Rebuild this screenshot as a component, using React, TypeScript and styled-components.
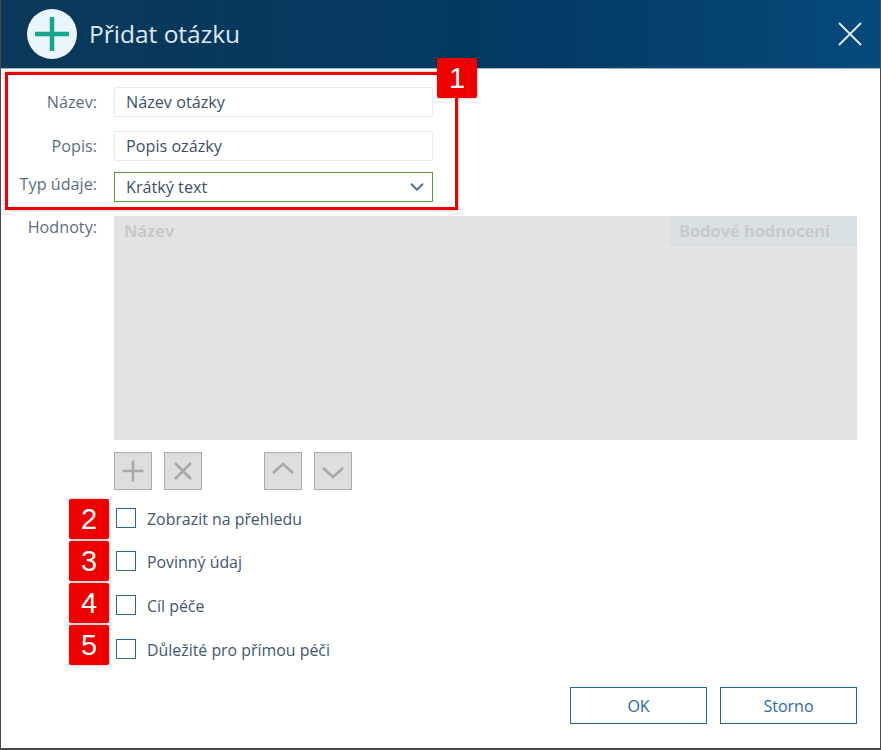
import styled, { createGlobalStyle } from "styled-components";
import { ChevronDown } from "lucide-react";

const GlobalStyle = createGlobalStyle`
  html, body {
    margin: 0;
    padding: 0;
    background: #ffffff;
  }
  * {
    box-sizing: border-box;
  }
`;

const DialogWindow = styled.div`
  position: relative;
  width: 881px;
  height: 750px;
  display: flex;
  flex-direction: column;
  background: #ffffff;
  border: 1px solid #4a4a4a;
  border-top: none;
  border-bottom-width: 2px;
  font-family: "Open Sans", "Liberation Sans", sans-serif;
  font-size: 16.2px;
  color: #42566e;
  overflow: hidden;
`;

const TitleBar = styled.header`
  height: 69px;
  flex: none;
  display: flex;
  align-items: center;
  padding: 0 18px 1px 26px;
  background: linear-gradient(90deg, #0a3859 0%, #033a63 60%, #064a7c 100%);
  border-bottom: 1px solid #9db6c9;
`;

const AddBadge = styled.div`
  width: 50px;
  height: 50px;
  border-radius: 50%;
  background: #e9f4fb;
  display: flex;
  align-items: center;
  justify-content: center;
`;

const Title = styled.h1`
  flex: 1;
  margin: 0 0 0 12px;
  font-size: 24.5px;
  font-weight: 400;
  color: #dfe9f0;
`;

const CloseButton = styled.button`
  width: 24px;
  height: 24px;
  padding: 0;
  border: none;
  background: none;
  display: flex;
`;

const FormBody = styled.main`
  flex: 1;
  display: flex;
  flex-direction: column;
  padding: 18px 23px 0 0;
`;

const FieldRow = styled.div<{ $gap: number }>`
  display: flex;
  align-items: center;
  margin-bottom: ${(p) => p.$gap}px;
`;

const FieldLabel = styled.label<{ $raised?: boolean }>`
  width: 96px;
  flex: none;
  margin-right: 17px;
  margin-bottom: ${(p) => (p.$raised ? "6px" : "0")};
  text-align: right;
  color: #5c6d80;
`;

const TextField = styled.div`
  width: 319px;
  height: 30px;
  display: flex;
  align-items: center;
  padding: 0 11px;
  border: 1px solid #e6ebf5;
  color: #3d5068;
`;

const SelectField = styled(TextField)`
  justify-content: space-between;
  padding-right: 4px;
  border-color: #5c9a3c;
`;

const ValuesRow = styled.div`
  display: flex;
  align-items: flex-start;
`;

const ValuesTable = styled.div`
  flex: 1;
  height: 224px;
  background: #e3e3e3;
`;

const TableHead = styled.div`
  display: flex;
  height: 32px;
  border-bottom: 1px solid #e8e8e8;
  font-size: 16.4px;
  font-weight: 700;
  line-height: 30px;
  color: #c6c9cd;
`;

const NameColumn = styled.div`
  flex: 1;
  padding-left: 10px;
`;

const ScoreColumn = styled.div`
  width: 187px;
  padding-left: 9px;
  background: #d9e1e5;
`;

const ToolRow = styled.div`
  display: flex;
  gap: 12px;
  margin: 12px 0 6px 113px;
`;

const ToolButton = styled.button<{ $spaced?: boolean }>`
  width: 38px;
  height: 38px;
  padding: 0;
  display: flex;
  align-items: center;
  justify-content: center;
  background: #dedede;
  border: 1px solid #adadad;
  margin-left: ${(p) => (p.$spaced ? "50px" : "0")};
`;

const CheckList = styled.div`
  display: flex;
  flex-direction: column;
  margin-left: 115px;
`;

const CheckRow = styled.label`
  height: 43.6px;
  display: flex;
  align-items: center;
  gap: 11px;
  font-size: 15.9px;
  color: #42566e;
`;

const CheckBox = styled.span`
  width: 20px;
  height: 20px;
  flex: none;
  border: 1px solid #2f6592;
`;

const CheckText = styled.span`
  padding-top: 2px;
`;

const ButtonBar = styled.footer`
  display: flex;
  justify-content: flex-end;
  gap: 13px;
  margin-top: 17px;
`;

const DialogButton = styled.button`
  width: 137px;
  height: 37px;
  background: #ffffff;
  border: 1px solid #1f6596;
  font-family: inherit;
  font-size: 16px;
  color: #2c6a9c;
`;

const HighlightFrame = styled.div`
  position: absolute;
  left: 4px;
  top: 72px;
  width: 453px;
  height: 138px;
  border: 3px solid #ee0000;
  box-shadow: 0 0 3px rgba(0, 0, 0, 0.35);
`;

const NumberBadge = styled.div<{ $left: number; $top: number }>`
  position: absolute;
  left: ${(p) => p.$left}px;
  top: ${(p) => p.$top}px;
  width: 40px;
  height: 40px;
  display: flex;
  align-items: center;
  justify-content: center;
  background: #ee0000;
  border-radius: 2px;
  box-shadow: 0 0 3px rgba(0, 0, 0, 0.35);
  font-family: "Liberation Sans", Arial, sans-serif;
  font-size: 29px;
  color: #ffffff;
`;

const checks = [
  "Zobrazit na přehledu",
  "Povinný údaj",
  "Cíl péče",
  "Důležité pro přímou péči",
];

const badges = [
  { n: 1, left: 436, top: 58 },
  { n: 2, left: 68, top: 499 },
  { n: 3, left: 68, top: 541 },
  { n: 4, left: 68, top: 583 },
  { n: 5, left: 68, top: 625 },
];

const ToolIcon = ({ d }: { d: string }) => (
  <svg width="28" height="28" viewBox="0 0 28 28" fill="none" stroke="#a8a8a8" strokeWidth="2.6">
    <path d={d} />
  </svg>
);

export default function App() {
  return (
    <>
      <GlobalStyle />
      <DialogWindow>
        <TitleBar>
          <AddBadge>
            <svg width="36" height="36" viewBox="0 0 36 36" fill="none" stroke="#17a58c" strokeWidth="4.5">
              <path d="M18 1v34M1 18h34" />
            </svg>
          </AddBadge>
          <Title>Přidat otázku</Title>
          <CloseButton>
            <svg width="24" height="24" viewBox="0 0 24 24" fill="none" stroke="#e8eff4" strokeWidth="1.8">
              <path d="M1 1l22 22M23 1L1 23" />
            </svg>
          </CloseButton>
        </TitleBar>
        <FormBody>
          <FieldRow $gap={14}>
            <FieldLabel>Název:</FieldLabel>
            <TextField>Název otázky</TextField>
          </FieldRow>
          <FieldRow $gap={11}>
            <FieldLabel>Popis:</FieldLabel>
            <TextField>Popis ozázky</TextField>
          </FieldRow>
          <FieldRow $gap={14}>
            <FieldLabel $raised>Typ údaje:</FieldLabel>
            <SelectField>
              Krátký text
              <ChevronDown size={22} color="#4a6c94" strokeWidth={2} />
            </SelectField>
          </FieldRow>
          <ValuesRow>
            <FieldLabel>Hodnoty:</FieldLabel>
            <ValuesTable>
              <TableHead>
                <NameColumn>Název</NameColumn>
                <ScoreColumn>Bodové hodnocení</ScoreColumn>
              </TableHead>
            </ValuesTable>
          </ValuesRow>
          <ToolRow>
            <ToolButton><ToolIcon d="M14 3.5v21M3.5 14h21" /></ToolButton>
            <ToolButton><ToolIcon d="M6 6l16 16M22 6L6 22" /></ToolButton>
            <ToolButton $spaced><ToolIcon d="M4 16l10-9 10 9" /></ToolButton>
            <ToolButton><ToolIcon d="M4 11l10 9 10-9" /></ToolButton>
          </ToolRow>
          <CheckList>
            {checks.map((label) => (
              <CheckRow key={label}>
                <CheckBox />
                <CheckText>{label}</CheckText>
              </CheckRow>
            ))}
          </CheckList>
          <ButtonBar>
            <DialogButton>OK</DialogButton>
            <DialogButton>Storno</DialogButton>
          </ButtonBar>
        </FormBody>
        <HighlightFrame />
        {badges.map((b) => (
          <NumberBadge key={b.n} $left={b.left} $top={b.top}>
            {b.n}
          </NumberBadge>
        ))}
      </DialogWindow>
    </>
  );
}
